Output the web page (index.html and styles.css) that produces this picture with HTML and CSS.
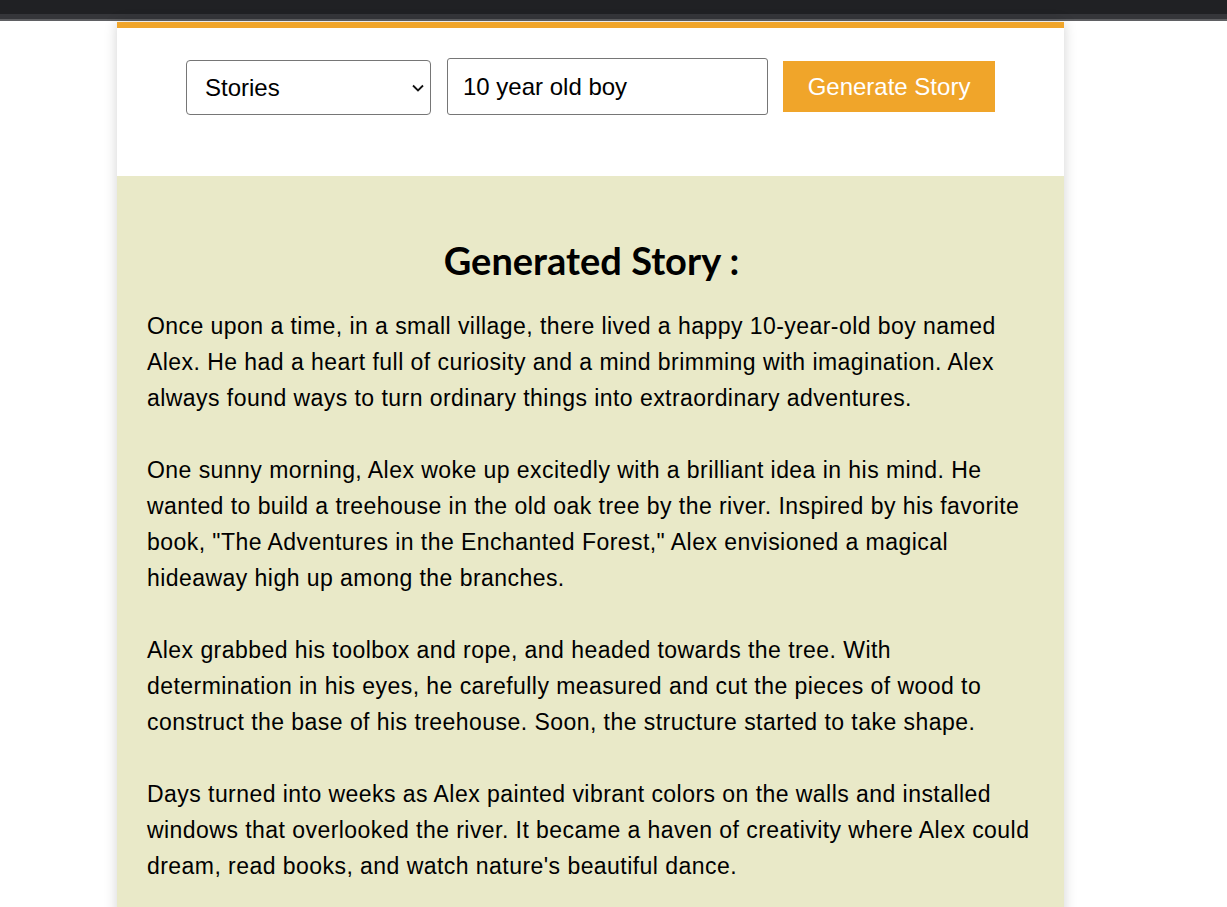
FILE: index.html
```html
<!DOCTYPE html>
<html lang="en">
<head>
<meta charset="utf-8">
<title>Story Generator</title>
<link rel="stylesheet" href="styles.css">
</head>
<body>
<div class="chrome">
  <div class="chrome-top"></div>
  <div class="chrome-mid"></div>
  <div class="chrome-line"></div>
</div>
<main class="card">
  <form class="controls">
    <div class="select-wrap">
      <select class="select">
        <option>Stories</option>
        <option>Poems</option>
      </select>
      <svg class="chevron" width="12" height="8" viewBox="0 0 12 8"><path d="M1 1.5 L6 6.5 L11 1.5" fill="none" stroke="#111" stroke-width="1.8"/></svg>
    </div>
    <input class="text-input" type="text" value="10 year old boy">
    <button class="btn" type="button">Generate Story</button>
  </form>
  <section class="story">
    <h2 class="story-title">Generated Story :</h2>
    <p>Once upon a time, in a small village, there lived a happy 10-year-old boy named Alex. He had a heart full of curiosity and a mind brimming with imagination. Alex always found ways to turn ordinary things into extraordinary adventures.</p>
    <p>One sunny morning, Alex woke up excitedly with a brilliant idea in his mind. He wanted to build a treehouse in the old oak tree by the river. Inspired by his favorite book, "The Adventures in the Enchanted Forest," Alex envisioned a magical hideaway high up among the branches.</p>
    <p>Alex grabbed his toolbox and rope, and headed towards the tree. With determination in his eyes, he carefully measured and cut the pieces of wood to construct the base of his treehouse. Soon, the structure started to take shape.</p>
    <p>Days turned into weeks as Alex painted vibrant colors on the walls and installed windows that overlooked the river. It became a haven of creativity where Alex could dream, read books, and watch nature's beautiful dance.</p>
  </section>
</main>
</body>
</html>
```

FILE: styles.css
```css
html, body {
  margin: 0;
  padding: 0;
  background: #ffffff;
  overflow: hidden;
  height: 907px;
}

body {
  font-family: "Liberation Sans", Arial, sans-serif;
  color: #000;
}

.chrome-top {
  height: 14px;
  background: #202124;
}
.chrome-mid {
  height: 5px;
  background: #35363a;
}
.chrome-line {
  height: 2px;
  background: #5f6063;
}

.card {
  width: 947px;
  margin: 1px 0 0 117px;
  border-top: 6px solid #f0a52a;
  background: #ffffff;
  box-shadow: 0 0 12px rgba(0, 0, 0, 0.18);
}

.controls {
  display: flex;
  justify-content: center;
  align-items: flex-start;
  gap: 15px;
  height: 148px;
  margin: 0;
}

.select-wrap {
  position: relative;
  margin-top: 32px;
}

.select {
  appearance: none;
  -webkit-appearance: none;
  width: 245px;
  height: 55px;
  border: 1px solid #767676;
  border-radius: 4px;
  background: #fff;
  font-family: "Liberation Sans", Arial, sans-serif;
  font-size: 24px;
  color: #000;
  padding: 0 0 0 18px;
  margin: 0;
  display: block;
}

.chevron {
  position: absolute;
  right: 7px;
  top: 24px;
  pointer-events: none;
}

.text-input {
  width: 321px;
  height: 57px;
  box-sizing: border-box;
  border: 1px solid #767676;
  border-radius: 3px;
  font-family: "Liberation Sans", Arial, sans-serif;
  font-size: 24px;
  color: #000;
  padding: 0 15px;
  margin: 30px 0 0 1px;
}

.btn {
  width: 212px;
  height: 51px;
  border: none;
  border-radius: 0;
  background: #f0a52a;
  color: #ffffff;
  font-family: "Liberation Sans", Arial, sans-serif;
  font-size: 24px;
  margin: 33px 0 0;
  padding: 0;
}

.story {
  background: #e9e9c8;
  padding: 60px 28px 40px 30px;
}

.story-title {
  margin: 0 0 24px;
  text-align: center;
  font-family: "Lato", "Open Sans", sans-serif;
  font-weight: 700;
  font-size: 38px;
  line-height: 48px;
}

.story p {
  margin: 0 0 36px;
  font-size: 23px;
  letter-spacing: 0.45px;
  line-height: 36px;
}
```
